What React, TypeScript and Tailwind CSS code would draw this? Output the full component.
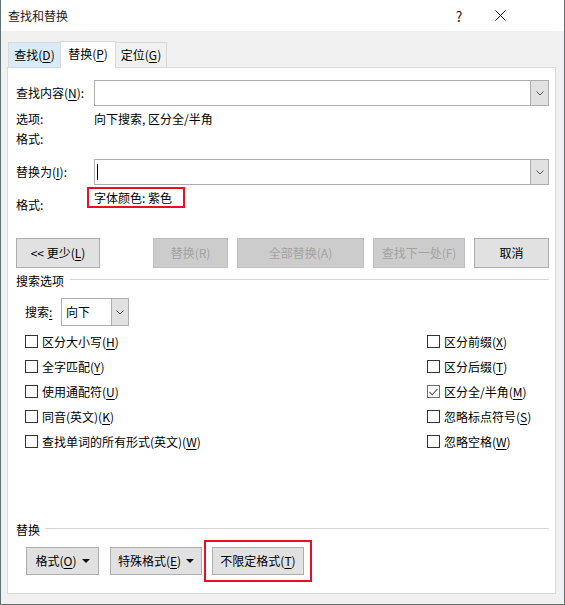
import type { ReactNode } from "react";

const U = ({ c }: { c: string }) => <span className="underline underline-offset-[2px]">{c}</span>;

const Chevron = () => (
  <svg width="8" height="5" viewBox="0 0 8 5">
    <polyline points="0.5,0.5 4,4 7.5,0.5" fill="none" stroke="#555" strokeWidth="1" />
  </svg>
);

const Caret = () => (
  <svg width="8" height="4" viewBox="0 0 8 4" className="ml-[5px]">
    <polygon points="0,0 8,0 4,4" fill="#111" />
  </svg>
);

function Combo({ cursor }: { cursor?: boolean }) {
  return (
    <div className="flex h-[26px] flex-1 border border-[#adadad] bg-white">
      <div className="flex flex-1 items-center pl-[2px]">
        {cursor && <span className="h-[16px] w-px bg-black" />}
      </div>
      <div className="flex w-[18px] items-center justify-center border-l border-[#adadad] bg-[#e1e1e1]">
        <Chevron />
      </div>
    </div>
  );
}

function Btn({ w, children, disabled }: { w: string; children: ReactNode; disabled?: boolean }) {
  return (
    <div
      className={
        "flex h-[30px] items-center justify-center border " +
        w +
        (disabled ? " border-[#bfbfbf] bg-[#cccccc] text-[#a3a3a3]" : " border-[#adadad] bg-[#e1e1e1] text-black")
      }
    >
      {children}
    </div>
  );
}

function Check({ label, checked }: { label: ReactNode; checked?: boolean }) {
  return (
    <div className="flex h-[25px] items-center gap-[4px]">
      <span
        className={
          "flex h-[13px] w-[13px] items-center justify-center border bg-white " +
          (checked ? "border-[#6d6d6d]" : "border-[#333]")
        }
      >
        {checked && (
          <svg width="9" height="8" viewBox="0 0 9 8">
            <polyline points="0.5,4 3.2,6.8 8.5,0.8" fill="none" stroke="#666" strokeWidth="1.2" />
          </svg>
        )}
      </span>
      <span>{label}</span>
    </div>
  );
}

function GroupTitle({ text, lineFrom }: { text: string; lineFrom: string }) {
  return (
    <div className="flex h-[20px] items-center">
      <span>{text}</span>
      <span className={"mb-[3px] h-px flex-1 bg-[#d5d5d5] " + lineFrom} />
    </div>
  );
}

export default function App() {
  return (
    <div className="flex h-[605px] w-[565px] flex-col border-x border-b border-[#5f7070] bg-[#f0f0f0] font-['Noto_Sans_CJK_SC','Microsoft_YaHei',sans-serif] text-[12px] leading-[20px] text-black">
      {/* title bar */}
      <div className="flex h-[31px] shrink-0 items-center bg-white pl-[7px]">
        <span className="flex-1 text-[#1a1a1a]">查找和替换</span>
        <span className="w-[36px] text-center text-[14px] text-[#222]">?</span>
        <span className="flex w-[46px] items-center justify-center">
          <svg width="11" height="11" viewBox="0 0 11 11">
            <path d="M0.5 0.5 L10.5 10.5 M10.5 0.5 L0.5 10.5" stroke="#111" strokeWidth="1" />
          </svg>
        </span>
        <span className="w-[41px]" />
      </div>

      <div className="flex flex-1 flex-col pb-[10px] pl-[6px] pr-[8px] pt-[10px]">
        {/* tabs */}
        <div className="flex h-[26px] items-end pl-[1px]">
          <div className="flex h-[25px] w-[52px] items-center justify-center border-l border-t border-[#d9d9d9] bg-[#d9eaf9]">
            查找(<U c="D" />)
          </div>
          <div className="relative z-10 -mb-px flex h-[27px] w-[56px] items-start justify-center border-x border-t border-[#d9d9d9] bg-white pt-[2px]">
            替换(<U c="P" />)
          </div>
          <div className="flex h-[25px] w-[51px] items-center justify-center border-r border-t border-[#d9d9d9]">
            定位(<U c="G" />)
          </div>
        </div>

        {/* panel */}
        <div className="flex flex-1 flex-col border border-[#d9d9d9] bg-white pb-[11px]">
          <div className="pl-[8px] pr-[6px]">
            <div className="mt-[12px] flex h-[26px] items-center">
              <span className="w-[78px]">
                查找内容(<U c="N" />):
              </span>
              <Combo />
            </div>
            <div className="mt-[3px] flex h-[20px] items-center">
              <span className="w-[78px]">选项:</span>
              <span>向下搜索, 区分全/半角</span>
            </div>
            <div className="flex h-[20px] items-center">
              <span className="w-[78px]">格式:</span>
            </div>
            <div className="mt-[10px] flex h-[26px] items-center">
              <span className="w-[78px]">
                替换为(<U c="I" />):
              </span>
              <Combo cursor />
            </div>
            <div className="mt-[2px] flex h-[28px] items-start">
              <span className="mt-[8px] w-[71px]">格式:</span>
              <div className="flex h-[21px] w-[98px] items-center border-2 border-[#e81123] pl-[5px]">字体颜色: 紫色</div>
            </div>

            <div className="mt-[23px] flex">
              <Btn w="w-[84px]">
                &lt;&lt; 更少(<U c="L" />)
              </Btn>
              <div className="ml-auto flex gap-[9px]">
                <Btn w="w-[75px]" disabled>
                  替换(R)
                </Btn>
                <Btn w="w-[127px]" disabled>
                  全部替换(A)
                </Btn>
                <Btn w="w-[92px]" disabled>
                  查找下一处(F)
                </Btn>
                <Btn w="w-[75px]">取消</Btn>
              </div>
            </div>

            <div className="mt-[3px]">
              <GroupTitle text="搜索选项" lineFrom="ml-[6px]" />
            </div>

            <div className="mt-[7px] flex h-[28px] items-center pl-[9px]">
              <span className="w-[36px]">
                搜索<U c=":" />
              </span>
              <div className="flex h-[28px] w-[68px] border border-[#adadad] bg-white">
                <span className="flex flex-1 items-center pl-[4px]">向下</span>
                <span className="flex w-[17px] items-center justify-center border-l border-[#adadad] bg-[#e1e1e1]">
                  <Chevron />
                </span>
              </div>
            </div>

            <div className="mt-[3px] flex pl-[9px]">
              <div className="flex w-[402px] flex-col">
                <Check label={<>区分大小写(<U c="H" />)</>} />
                <Check label={<>全字匹配(<U c="Y" />)</>} />
                <Check label={<>使用通配符(<U c="U" />)</>} />
                <Check label={<>同音(英文)(<U c="K" />)</>} />
                <Check label={<>查找单词的所有形式(英文)(<U c="W" />)</>} />
              </div>
              <div className="flex flex-col">
                <Check label={<>区分前缀(<U c="X" />)</>} />
                <Check label={<>区分后缀(<U c="T" />)</>} />
                <Check checked label={<>区分全/半角(<U c="M" />)</>} />
                <Check label={<>忽略标点符号(<U c="S" />)</>} />
                <Check label={<>忽略空格(<U c="W" />)</>} />
              </div>
            </div>
          </div>

          {/* replace group */}
          <div className="mt-auto pl-[8px] pr-[6px]">
            <GroupTitle text="替换" lineFrom="ml-[5px]" />
            <div className="flex h-[42px] items-center pl-[10px]">
              <div className="flex h-[28px] w-[73px] items-center justify-center border border-[#adadad] bg-[#e1e1e1]">
                格式(<U c="O" />)
                <Caret />
              </div>
              <div className="ml-[11px] flex h-[28px] w-[92px] items-center justify-center border border-[#adadad] bg-[#e1e1e1]">
                特殊格式(<U c="E" />)
                <Caret />
              </div>
              <div className="ml-[2px] flex border-2 border-[#e81123] px-[6px] py-[5px]">
                <div className="flex h-[28px] w-[92px] items-center justify-center border border-[#adadad] bg-[#e1e1e1]">
                  不限定格式(<U c="T" />)
                </div>
              </div>
            </div>
          </div>
        </div>
      </div>
    </div>
  );
}
